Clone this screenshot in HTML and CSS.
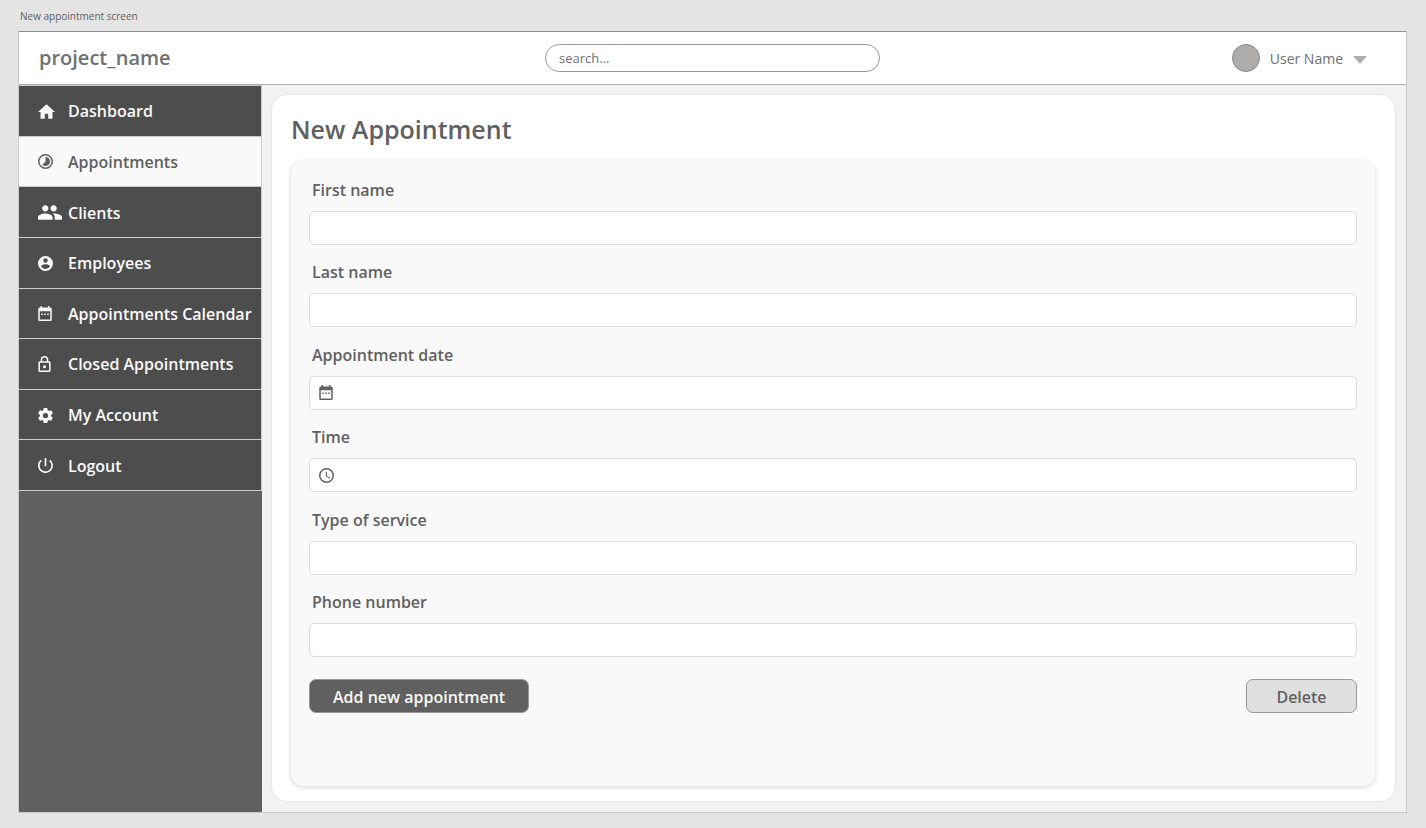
FILE: index.html
```
<!DOCTYPE html>
<html lang="en">
<head>
<meta charset="utf-8">
<meta name="viewport" content="width=device-width, initial-scale=1">
<title>New appointment screen</title>
<link rel="stylesheet" href="styles.css">
</head>
<body>
<div class="caption">New appointment screen</div>
<div class="frame">
  <header class="topbar">
    <a class="brand" href="#">project_name</a>
    <input class="search" type="search" placeholder="search..." aria-label="Search">
    <button class="user" type="button">
      <span class="avatar"></span>
      <span>User Name</span>
      <svg class="caret" viewBox="0 0 14 8" aria-hidden="true"><path d="M0 0h14L7 8z"/></svg>
    </button>
  </header>
  <div class="body">
    <aside class="sidebar">
      <nav class="menu">
        <a class="item" href="#"><svg class="icon icon-home" viewBox="2 3 20 17" aria-hidden="true"><path d="M10 20v-6h4v6h5v-8h3L12 3 2 12h3v8z"/></svg>Dashboard</a>
        <a class="item active" href="#" aria-current="page"><svg class="icon" viewBox="2 2 20 20" aria-hidden="true"><path d="M16.240 7.760A5.970 5.970 0 0 0 12 6v6l-4.240 4.240c2.340 2.340 6.140 2.340 8.490 0a5.990 5.990 0 0 0-.010-8.480zM12 2a10 10 0 1 0 0 20 10 10 0 0 0 0-20zm0 18a8 8 0 1 1 0-16 8 8 0 0 1 0 16z"/></svg>Appointments</a>
        <a class="item" href="#"><svg class="icon icon-people" viewBox="1 5 23 14" aria-hidden="true"><path d="M16 11c1.660 0 2.990-1.340 2.990-3S17.660 5 16 5s-3 1.340-3 3 1.340 3 3 3zm-8 0c1.660 0 2.990-1.340 2.990-3S9.660 5 8 5 5 6.340 5 8s1.340 3 3 3zm0 2c-2.330 0-7 1.170-7 3.500V19h14v-2.500c0-2.330-4.670-3.500-7-3.500zm8 0c-.290 0-.620.020-.970.050 1.160.840 1.970 1.970 1.970 3.450V19h7v-2.500c0-2.330-4.670-3.500-8-3.500z"/></svg>Clients</a>
        <a class="item" href="#"><svg class="icon" viewBox="2 2 20 20" aria-hidden="true"><path d="M12 2a10 10 0 1 0 0 20 10 10 0 0 0 0-20zm0 3a3 3 0 1 1 0 6 3 3 0 0 1 0-6zm0 14.200a7.200 7.200 0 0 1-6-3.220c.030-1.990 4-3.080 6-3.080s5.970 1.090 6 3.080a7.200 7.200 0 0 1-6 3.220z"/></svg>Employees</a>
        <a class="item" href="#"><svg class="icon icon-date" viewBox="3 1 18 20" aria-hidden="true"><path d="M7 11h2v2H7zm4 0h2v2h-2zm4 0h2v2h-2zM19 3h-1V1h-2v2H8V1H6v2H5a2 2 0 0 0-2 2v14a2 2 0 0 0 2 2h14a2 2 0 0 0 2-2V5a2 2 0 0 0-2-2zm0 16H5V8h14z"/></svg>Appointments Calendar</a>
        <a class="item" href="#"><svg class="icon icon-lock" viewBox="4 1 16 21" aria-hidden="true"><path d="M12 17a2 2 0 1 0 0-4 2 2 0 0 0 0 4zm6-9h-1V6A5 5 0 0 0 7 6v2H6a2 2 0 0 0-2 2v10a2 2 0 0 0 2 2h12a2 2 0 0 0 2-2V10a2 2 0 0 0-2-2zM9 6a3 3 0 0 1 6 0v2H9zm9 14H6V10h12z"/></svg>Closed Appointments</a>
        <a class="item" href="#"><svg class="icon" viewBox="2 2 20 20" aria-hidden="true"><path d="M19.430 12.980c.040-.320.070-.640.070-.980s-.030-.660-.070-.980l2.110-1.650c.190-.150.240-.420.120-.640l-2-3.460c-.120-.220-.390-.300-.610-.220l-2.490 1c-.520-.400-1.080-.730-1.690-.980l-.380-2.650A.490.490 0 0 0 14 2h-4c-.250 0-.460.180-.490.420l-.380 2.650c-.610.250-1.170.590-1.690.980l-2.490-1c-.230-.090-.490 0-.610.220l-2 3.460c-.130.220-.070.490.120.640l2.110 1.650c-.040.320-.070.650-.070.980s.030.660.070.980l-2.110 1.650c-.190.150-.240.420-.120.640l2 3.460c.120.220.390.300.610.220l2.490-1c.520.400 1.080.730 1.690.980l.380 2.650c.030.240.240.420.490.420h4c.250 0 .460-.180.490-.420l.380-2.650c.610-.250 1.170-.590 1.690-.980l2.490 1c.230.090.490 0 .610-.220l2-3.460c.120-.220.070-.490-.120-.640zM12 15.500a3.500 3.500 0 1 1 0-7 3.500 3.500 0 0 1 0 7z"/></svg>My Account</a>
        <a class="item" href="#"><svg class="icon" viewBox="3 3 18 18" aria-hidden="true"><path d="M13 3h-2v10h2zm4.830 2.170l-1.420 1.420A6.920 6.920 0 0 1 19 12a7 7 0 1 1-11.420-5.420L6.170 5.170A9 9 0 1 0 21 12a8.940 8.940 0 0 0-3.170-6.830z"/></svg>Logout</a>
      </nav>
    </aside>
    <main class="panel">
      <h1 class="title">New Appointment</h1>
      <form class="form">
        <div class="fields">
          <div class="field"><label for="first">First name</label><input id="first" class="box" type="text"></div>
          <div class="field"><label for="last">Last name</label><input id="last" class="box" type="text"></div>
          <div class="field"><label for="date">Appointment date</label>
            <div class="box with-icon"><svg class="icon-date" viewBox="3 1 18 20" aria-hidden="true"><path d="M7 11h2v2H7zm4 0h2v2h-2zm4 0h2v2h-2zM19 3h-1V1h-2v2H8V1H6v2H5a2 2 0 0 0-2 2v14a2 2 0 0 0 2 2h14a2 2 0 0 0 2-2V5a2 2 0 0 0-2-2zm0 16H5V8h14z"/></svg><input id="date" type="text"></div></div>
          <div class="field"><label for="time">Time</label>
            <div class="box with-icon"><svg class="icon-clock" viewBox="2 2 20 20" aria-hidden="true"><path d="M12 2a10 10 0 1 0 0 20 10 10 0 0 0 0-20zm0 18a8 8 0 1 1 0-16 8 8 0 0 1 0 16zm.500-13H11v6l5.250 3.150.750-1.230-4.500-2.670z"/></svg><input id="time" type="text"></div></div>
          <div class="field"><label for="service">Type of service</label><input id="service" class="box" type="text"></div>
          <div class="field"><label for="phone">Phone number</label><input id="phone" class="box" type="tel"></div>
        </div>
        <div class="actions">
          <button class="btn primary" type="submit">Add new appointment</button>
          <button class="btn" type="button">Delete</button>
        </div>
      </form>
    </main>
  </div>
</div>
</body>
</html>
```
FILE: styles.css
```
* { box-sizing: border-box; }

body {
  margin: 0;
  min-height: 100vh;
  padding: 0 19px 15px 18px;
  display: flex;
  flex-direction: column;
  background: #e4e4e4;
  color: #606060;
  font-family: "Open Sans", "Noto Sans", sans-serif;
}

input, button { font: inherit; color: inherit; }
a { color: inherit; text-decoration: none; }
svg { fill: currentColor; flex: none; }

.caption {
  padding: 8px 2px 7px;
  font-size: 10px;
  line-height: 16px;
}

.frame {
  flex: 1;
  display: flex;
  flex-direction: column;
  background: #f2f2f2;
  border: 1px solid #c8c8c8;
  border-top-color: #909090;
}

.topbar {
  height: 53px;
  padding: 0 20px;
  display: grid;
  grid-template-columns: 1fr 335px 1fr;
  align-items: center;
  background: #fff;
  border-bottom: 1px solid #aaa;
}

.brand {
  font-size: 20px;
  line-height: 30px;
  font-weight: 600;
  color: #707070;
}

.search {
  width: 100%;
  height: 28px;
  padding: 0 13px;
  border: 1px solid #999;
  border-radius: 14px;
  background: #fff;
  font-size: 13px;
  appearance: none;
}
.search::placeholder { color: #707070; opacity: 1; }

.user {
  justify-self: end;
  display: flex;
  align-items: center;
  gap: 10px;
  padding: 0 19px 0 0;
  border: 0;
  background: none;
  font-size: 14px;
  color: #707070;
}

.avatar {
  width: 28px;
  height: 28px;
  border: 1px solid #8a8a8a;
  border-radius: 50%;
  background: #aeadac;
}

.caret { width: 14px; height: 8px; fill: #aeadac; margin-top: 4px; }

.body { flex: 1; display: flex; }

.sidebar { width: 243px; flex: none; background: #606060; }

.menu {
  min-height: 406px;
  border-top: 1px solid #ccc;
  display: grid;
  grid-template-columns: minmax(0, 1fr);
  grid-auto-rows: 1fr;
}

.item {
  display: flex;
  align-items: center;
  padding-top: 1px;
  padding-left: 19px;
  background: #4d4d4d;
  border-bottom: 1px solid #ccc;
  border-right: 1px solid #ccc;
  color: #fafafa;
  font-size: 16px;
  font-weight: 600;
  white-space: nowrap;
}
.item.active { background: #f9f9f9; color: #606060; }

.icon { width: 15px; height: 15px; margin-right: 15px; }
.icon-home { width: 17px; margin-right: 13px; }
.icon-people { width: 24px; height: 15px; margin-right: 6px; }
.icon.icon-date { margin-right: 16px; }
.icon-date { width: 14px; height: 15px; }
.icon-lock { width: 13px; height: 16px; margin-right: 17px; }
.icon-clock { width: 15px; height: 15px; }

.panel {
  flex: 1;
  display: flex;
  flex-direction: column;
  margin: 9px 10px 10px 9px;
  padding: 17px 20px 15px 19px;
  background: #fff;
  border: 1px solid #e8e8e8;
  border-radius: 16px;
}

.title {
  margin: 0 0 15px;
  font-size: 25px;
  line-height: 34px;
  font-weight: 600;
}

.form {
  flex: 1;
  padding: 1px 18px 24px;
  border-radius: 12px;
  background: #f9f9f9;
  box-shadow: 0 1px 5px rgba(0, 0, 0, 0.18);
}

.fields {
  min-height: 495px;
  display: grid;
  grid-auto-rows: 1fr;
}

.field {
  display: flex;
  flex-direction: column;
  justify-content: flex-end;
  gap: 9px;
}

.field label {
  padding-left: 3px;
  font-size: 16px;
  line-height: 24px;
  font-weight: 600;
}

.box {
  width: 100%;
  height: 34px;
  padding: 0 9px;
  border: 1px solid #dcdcdc;
  border-radius: 5px;
  background: #fff;
  font-size: 16px;
}

.with-icon { display: flex; align-items: center; gap: 8px; }
.with-icon input {
  flex: 1;
  min-width: 0;
  padding: 0;
  border: 0;
  outline: 0;
  background: none;
}

.actions {
  display: flex;
  justify-content: space-between;
  margin-top: 22px;
}

.btn {
  height: 34px;
  min-width: 111px;
  padding: 2px 23px 0;
  border: 1px solid #999;
  border-radius: 7px;
  background: #e0e0e0;
  font-size: 16px;
  font-weight: 600;
}
.btn.primary { background: #606060; color: #fafafa; }
```
